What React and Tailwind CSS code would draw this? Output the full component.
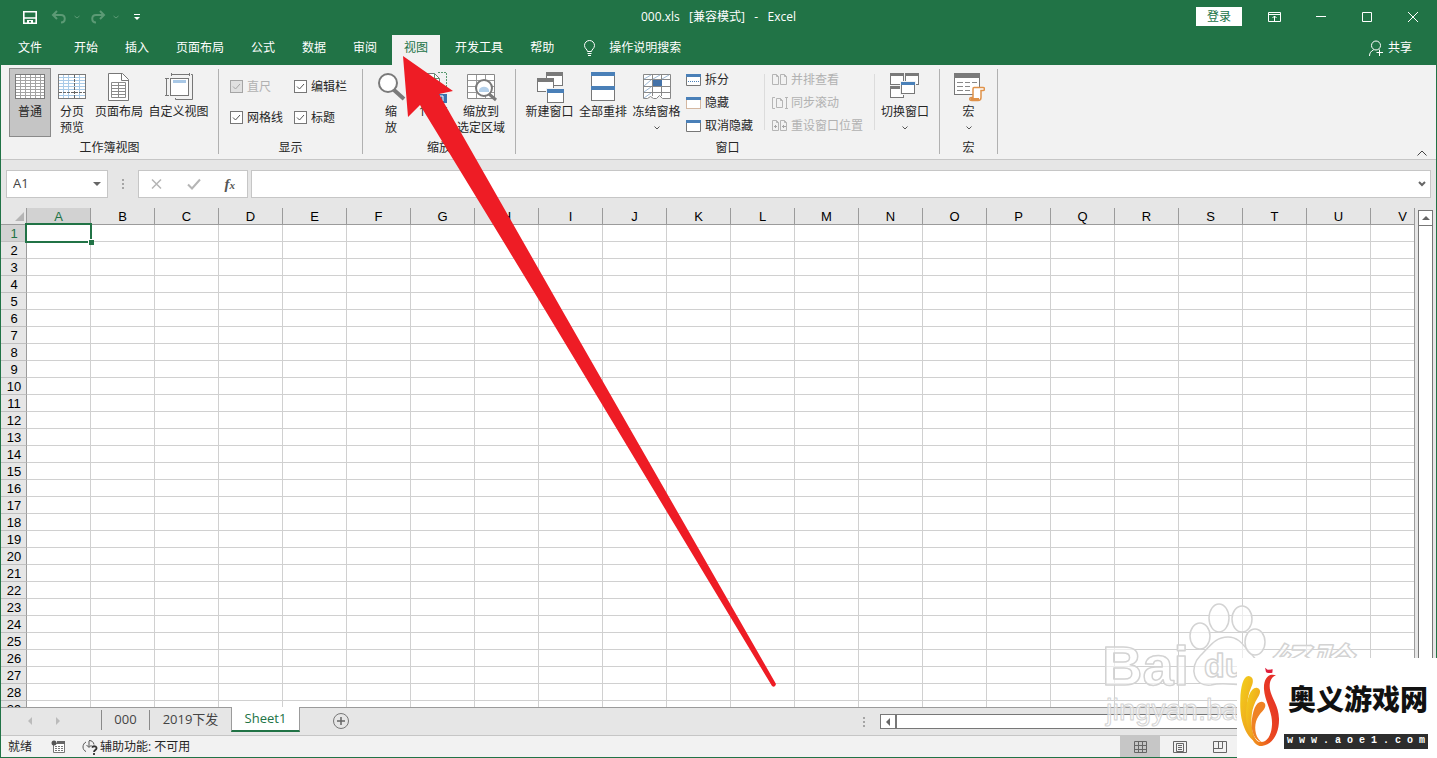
import React from 'react';

const columns = 'ABCDEFGHIJKLMNOPQRSTUV'.split('');
const rows = Array.from({ length: 29 }, (_, i) => i + 1);

/* ---------- icons ---------- */

const Icon = ({ size = 'w-8 h-8', box = '0 0 32 32', children }) => (
  <svg className={`${size} shrink-0`} viewBox={box} fill="none" aria-hidden="true">
    {children}
  </svg>
);

const Caret = () => (
  <Icon size="w-2 h-2" box="0 0 8 8">
    <path d="M1.500 2.500 4 5l2.500-2.500" stroke="#555" />
  </Icon>
);

const NormalIcon = () => (
  <Icon>
    <rect x="1.500" y="2.500" width="29" height="24" fill="#fff" stroke="#7a7a7a" />
    <path
      d="M6.500 3v23M11.500 3v23M16.500 3v23M21.500 3v23M26.500 3v23M2 5.500h28M2 8.500h28M2 11.500h28M2 14.500h28M2 17.500h28M2 20.500h28M2 23.500h28"
      stroke="#a3a3a3"
    />
  </Icon>
);

const PageBreakIcon = () => (
  <Icon>
    <rect x="2.500" y="2.500" width="27" height="24" fill="#fff" />
    <path
      d="M7.500 3v23M12.500 3v23M23.500 3v23M3 5.500h26M3 8.500h26M3 11.500h26M3 14.500h26M3 17.500h26M3 23.500h26"
      stroke="#a9cbe8"
    />
    <rect x="2.500" y="2.500" width="27" height="24" stroke="#7a7a7a" />
    <path d="M18.500 3v23M3 20.500h26" stroke="#666" strokeDasharray="3 1" />
  </Icon>
);

const PageLayoutIcon = () => (
  <Icon>
    <path d="M5.500 1.500h14l6 6v21h-20z" fill="#fff" stroke="#777" />
    <path d="M18.500 1.500v7h7" stroke="#777" />
    <path d="M8.500 10.500h14v15h-14zM8.500 13.500h14M8.500 16.500h14M8.500 19.500h14M8.500 22.500h14M15.500 10.500v15" stroke="#8a8a8a" />
  </Icon>
);

const CustomViewIcon = () => (
  <Icon>
    <path d="M8.500 1v3M26.500 1v3M8 2.500h18M2 6.500h4M2 23.500h4M3.500 6v18" stroke="#777" />
    <path d="M28 2.500h1.500v25h-17V26" stroke="#777" />
    <rect x="7.500" y="6.500" width="18" height="17" fill="#fff" stroke="#777" />
    <rect x="10" y="8" width="13" height="3" fill="#a9c8e6" />
  </Icon>
);

const ZoomIcon = () => (
  <Icon>
    <path d="m19 18 10 9" stroke="#7a7a7a" strokeWidth="4" />
    <circle cx="13" cy="11" r="9" fill="#fff" stroke="#7a7a7a" strokeWidth="2" />
  </Icon>
);

const Zoom100Icon = () => (
  <Icon>
    <path d="M4.500 1.500h12l5 5v20h-17z" fill="#fff" stroke="#777" />
    <path d="M16.500 1.500v5h5" stroke="#5c9a72" />
    <path d="M20 .5h8.500V20" stroke="#5c9a72" strokeDasharray="2 1" />
    <rect x="7" y="22" width="22" height="9" fill="#3b73af" />
    <path d="M11.500 24v5M15 24h3v5h-3zM22 24h3v5h-3z" stroke="#fff" />
  </Icon>
);

const ZoomSelectionIcon = () => (
  <Icon>
    <path d="M2.500 2.500h27v24h-27z" fill="#fff" stroke="#888" />
    <path d="M11.500 3v23M20.500 3v23M3 8.500h26M3 14.500h26M3 20.500h26" stroke="#999" />
    <path d="m24 22 7 6" stroke="#7a7a7a" strokeWidth="3" />
    <circle cx="19" cy="16" r="8" fill="#fff" stroke="#7a7a7a" strokeWidth="2" />
    <path d="M14 18a5.500 5.500 0 0 1 10 0v2H14z" fill="#b4d0ea" />
  </Icon>
);

const MiniWindow = ({ x, y, w = 16, h = 13, head = 4, bar = '#7a7a7a' }) => (
  <>
    <rect x={x + 0.5} y={y + 0.5} width={w - 1} height={h - 1} fill="#fff" stroke="#777" />
    <rect x={x} y={y} width={w} height={head} fill={bar} />
  </>
);

const NewWindowIcon = () => (
  <Icon>
    <MiniWindow x={12} y={0} w={17} h={14} />
    <MiniWindow x={3} y={6} w={17} h={14} />
    <rect x="12" y="16" width="18" height="15" fill="#f2f2f2" />
    <MiniWindow x={13} y={17} w={17} h={14} bar="#4a80b8" />
  </Icon>
);

const ArrangeIcon = () => (
  <Icon>
    <MiniWindow x={4} y={0} w={24} h={15} bar="#4a80b8" />
    <MiniWindow x={4} y={14} w={24} h={15} bar="#4a80b8" />
  </Icon>
);

const FreezeIcon = () => (
  <Icon>
    <path d="M2.500 2.500h27v24h-8l-3-3-3 3h-3l-3-2-3 2h-4z" fill="#fff" stroke="#888" />
    <path d="M11.500 3v21M20.500 3v21M3 7.500h26M3 14.500h26M3 20.500h26" stroke="#888" />
    <path d="m3 7 7-4M12 7l7-4M21 7l7-4M3 14l7-6M3 20l7-5M3 26l7-5" stroke="#9db7d3" />
    <rect x="12" y="8" width="9" height="6" fill="#4472a8" />
  </Icon>
);

const SwitchIcon = () => (
  <Icon>
    <MiniWindow x={1} y={1} w={14} h={12} head={3} />
    <MiniWindow x={16} y={1} w={14} h={12} head={3} />
    <MiniWindow x={1} y={14} w={14} h={12} head={3} />
    <rect x="11" y="9" width="16" height="14" fill="#f2f2f2" />
    <MiniWindow x={12} y={10} w={14} h={12} head={3} bar="#4a80b8" />
  </Icon>
);

const MacroIcon = () => (
  <Icon>
    <rect x="1.500" y="1.500" width="25" height="21" fill="#fff" stroke="#777" />
    <rect x="1" y="1" width="26" height="5" fill="#7a7a7a" />
    <path d="M4 10.500h6M12 10.500h5M19 10.500h5M4 14.500h6M12 14.500h5M4 18.500h6M12 18.500h5" stroke="#888" />
    <path
      d="M21 15.500h9c2 0 2 3 0 3h-2v7c0 2-1 3-3 3h-6c-3 0-3-3 0-3h1V17c0-1 0-1.500 1-1.500z"
      fill="#fff"
      stroke="#e0924a"
      strokeWidth="1.500"
    />
    <path d="M18 26h8v2h-8z" fill="#e0924a" />
  </Icon>
);

const SmallWindow = ({ variant }) => (
  <Icon size="w-4 h-4" box="0 0 16 16">
    <path
      d="M.5 2.500h14v11H.5z"
      fill="#fff"
      stroke={variant === 'hide' ? '#b0764a' : '#777'}
      strokeDasharray={variant === 'hide' ? '1 1' : undefined}
    />
    <path d="M0 2h15v3H0z" fill="#4a80b8" />
    {variant === 'split' && <path d="M2 9.500h12" stroke="#4a80b8" strokeDasharray="1 1" />}
  </Icon>
);

const SidePages = ({ variant }) => (
  <Icon size="w-4 h-4" box="0 0 16 16">
    {variant === 'sync' ? (
      <path d="M3 2.500H.5v11H3M4.500 3.500h4l2 2v7h-6zM8.500 3.500v2h2M14.500 2v12M13 2.500h3M13 13.500h3" stroke="#b5b5b5" />
    ) : (
      <path
        d="M.5 2.500h4l2 2v8h-6zM4.500 2.500v2h2M8.500 2.500h4l2 2v8h-6zM12.500 2.500v2h2"
        stroke="#b5b5b5"
      />
    )}
    {variant === 'reset' && <path d="M2 8.500h3M10 8.500h4M3.500 7v3M11.500 7v3" stroke="#a5a5a5" />}
  </Icon>
);

/* ---------- ribbon building blocks ---------- */

const Group = ({ label, className = '', children }) => (
  <section className="flex shrink-0">
    <div className="flex flex-col">
      <div className={`flex h-[72px] items-start ${className}`}>{children}</div>
      <div className="text-center leading-4">{label}</div>
    </div>
    <div className="mt-px mb-[5px] w-px bg-[#b1b1b1]" />
  </section>
);

const BigButton = ({ icon, lines, width, active, caret }) => (
  <button
    className={`flex h-[69px] shrink-0 flex-col items-center border pt-[3px] leading-4 whitespace-nowrap ${width} ${
      active ? 'border-[#8a8a8a] bg-[#c5c5c5]' : 'border-transparent'
    }`}
  >
    {icon}
    {lines.map((line) => (
      <span key={line}>{line}</span>
    ))}
    {caret && <span className="flex h-4 items-center"><Caret /></span>}
  </button>
);

const SmallButton = ({ icon, label, disabled }) => (
  <button
    disabled={disabled}
    className={`flex h-[23px] items-center gap-[3px] whitespace-nowrap ${disabled ? 'text-[#b1b1b1]' : ''}`}
  >
    {icon}
    {label}
  </button>
);

const Check = ({ label, disabled }) => (
  <label className={`flex h-[31px] items-center gap-1 whitespace-nowrap ${disabled ? 'text-[#b1b1b1]' : ''}`}>
    <span className="relative flex">
      <input
        type="checkbox"
        defaultChecked
        disabled={disabled}
        className="h-[13px] w-[13px] appearance-none border border-[#777] bg-white disabled:border-[#a5a5a5] disabled:bg-[#e0e0e0]"
      />
      <svg className="pointer-events-none absolute inset-0" viewBox="0 0 13 13" fill="none" aria-hidden="true">
        <path d="m3 6.500 2.500 2.500L10 4" stroke={disabled ? '#a5a5a5' : '#555'} />
      </svg>
    </span>
    {label}
  </label>
);

/* ---------- window sections ---------- */

const TitleBar = () => (
  <header className="grid h-[33px] grid-cols-[1fr_auto_1fr] items-center">
    <div className="flex items-center pl-[21px]">
      <button aria-label="保存">
        <Icon size="w-4 h-4" box="0 0 16 16">
          <path d="M1.800 2.800h12.400v11.400H1.800z" stroke="#fff" strokeWidth="1.600" />
          <path d="M2 8.300h12v1.500H2zM5 11h6v3H9v-2H7v2H5z" fill="#fff" />
        </Icon>
      </button>
      <button className="ml-[13px] flex items-center gap-1.5" aria-label="撤消">
        <Icon size="w-4 h-4" box="0 0 16 16">
          <path d="M6 2 2 6l4 4M2.500 6H10c5 0 5 7.500 0 7.500" stroke="#5c9a75" strokeWidth="2" />
        </Icon>
        <Icon size="w-2 h-2" box="0 0 8 8"><path d="m1.500 3 2.500 2 2.500-2" stroke="#5c9a75" /></Icon>
      </button>
      <button className="ml-[9px] flex items-center gap-1.5" aria-label="恢复">
        <Icon size="w-4 h-4" box="0 0 16 16">
          <path d="m10 2 4 4-4 4M13.500 6H6c-5 0-5 7.500 0 7.500" stroke="#5c9a75" strokeWidth="2" />
        </Icon>
        <Icon size="w-2 h-2" box="0 0 8 8"><path d="m1.500 3 2.500 2 2.500-2" stroke="#5c9a75" /></Icon>
      </button>
      <button className="ml-[13px]" aria-label="自定义快速访问工具栏">
        <Icon size="w-2 h-2" box="0 0 8 8">
          <path d="M1 1.500h6" stroke="#fff" />
          <path d="M1 4h6L4 7z" fill="#fff" />
        </Icon>
      </button>
    </div>
    <h1 className="whitespace-pre">000.xls   [兼容模式]   -   Excel</h1>
    <div className="flex items-center justify-end">
      <button className="mr-2.5 h-[19px] w-[46px] bg-white text-[#217346]">登录</button>
      <button className="flex w-[46px] justify-center" aria-label="功能区显示选项">
        <Icon size="w-4 h-4" box="0 0 16 16">
          <path d="M1.500 3.500h12v9h-12zM1.500 5.500h12M7.500 12V7M5.500 9l2-2 2 2" stroke="#fff" />
        </Icon>
      </button>
      <button className="flex w-[46px] justify-center" aria-label="最小化">
        <Icon size="w-4 h-4" box="0 0 16 16"><path d="M3 7.500h10" stroke="#fff" /></Icon>
      </button>
      <button className="flex w-[46px] justify-center" aria-label="最大化">
        <Icon size="w-4 h-4" box="0 0 16 16"><path d="M3.500 3.500h9v9h-9z" stroke="#fff" /></Icon>
      </button>
      <button className="flex w-[46px] justify-center" aria-label="关闭">
        <Icon size="w-4 h-4" box="0 0 16 16"><path d="m3 3 10 10M13 3 3 13" stroke="#fff" /></Icon>
      </button>
    </div>
  </header>
);

const TabBar = () => (
  <nav className="flex h-8 items-end gap-[3px] whitespace-nowrap">
    <button className="h-[30px] w-[58px] pb-1">文件</button>
    {['开始', '插入', '页面布局', '公式', '数据', '审阅', '视图', '开发工具', '帮助'].map((tab) => (
      <button
        key={tab}
        className={`h-[30px] px-3 pb-1 ${tab === '视图' ? 'bg-[#f2f2f2] text-[#217346]' : ''}`}
      >
        {tab}
      </button>
    ))}
    <button className="ml-3 flex h-[30px] items-center gap-3 pb-1">
      <Icon size="w-4 h-[18px]" box="0 0 16 18">
        <path d="M6.500 12.500c0-2-3-3-3-6a5 5 0 0 1 10 0c0 3-3 4-3 6zM6.500 14.500h4M7 16.500h3" stroke="#fff" />
      </Icon>
      操作说明搜索
    </button>
    <button className="mr-6 ml-auto flex h-[30px] items-center gap-1 pb-1">
      <Icon size="w-4 h-4" box="0 0 16 16">
        <circle cx="8" cy="5.500" r="4.500" stroke="#fff" />
        <path d="M1.500 16c0-3 1.500-5 4-6M8.500 12.500H15M11.500 9.500V16" stroke="#fff" />
      </Icon>
      共享
    </button>
  </nav>
);

const Ribbon = () => (
  <div className="flex h-[95px] border-b border-[#c6c6c6] bg-[#f2f2f2] pt-[3px]">
    <Group label="工作簿视图" className="pr-[6px] pl-2">
      <BigButton icon={<NormalIcon />} lines={['普通']} width="w-[42px]" active />
      <BigButton icon={<PageBreakIcon />} lines={['分页', '预览']} width="w-[42px]" />
      <BigButton icon={<PageLayoutIcon />} lines={['页面布局']} width="w-[52px]" />
      <BigButton icon={<CustomViewIcon />} lines={['自定义视图']} width="w-[67px]" />
    </Group>
    <Group label="显示">
      <div className="grid w-[143px] grid-cols-[64px_auto] pt-[3px] pl-[11px]">
        <Check label="直尺" disabled />
        <Check label="编辑栏" />
        <Check label="网格线" />
        <Check label="标题" />
      </div>
    </Group>
    <Group label="缩放" className="pr-2 pl-[6px]">
      <BigButton icon={<ZoomIcon />} lines={['缩', '放']} width="w-[44px]" />
      <BigButton icon={<Zoom100Icon />} lines={['100%']} width="w-[42px]" />
      <BigButton icon={<ZoomSelectionIcon />} lines={['缩放到', '选定区域']} width="w-[52px]" />
    </Group>
    <Group label="窗口" className="pl-[7px]">
      <BigButton icon={<NewWindowIcon />} lines={['新建窗口']} width="w-[53px]" />
      <BigButton icon={<ArrangeIcon />} lines={['全部重排']} width="w-[54px]" />
      <BigButton icon={<FreezeIcon />} lines={['冻结窗格']} width="w-[53px]" caret />
      <div className="w-[81px] pl-[3px]">
        <SmallButton icon={<SmallWindow variant="split" />} label="拆分" />
        <SmallButton icon={<SmallWindow variant="hide" />} label="隐藏" />
        <SmallButton icon={<SmallWindow />} label="取消隐藏" />
      </div>
      <div className="mt-1.5 h-14 w-px bg-[#dcdcdc]" />
      <div className="w-[109px] pl-[7px]">
        <SmallButton icon={<SidePages />} label="并排查看" disabled />
        <SmallButton icon={<SidePages variant="sync" />} label="同步滚动" disabled />
        <SmallButton icon={<SidePages variant="reset" />} label="重设窗口位置" disabled />
      </div>
      <div className="mt-1.5 mr-px h-14 w-px bg-[#dcdcdc]" />
      <BigButton icon={<SwitchIcon />} lines={['切换窗口']} width="w-[58px] mr-[5px]" caret />
    </Group>
    <Group label="宏">
      <BigButton icon={<MacroIcon />} lines={['宏']} width="w-[57px]" caret />
    </Group>
    <button className="mr-2 ml-auto self-end" aria-label="折叠功能区">
      <Icon size="w-3 h-3" box="0 0 12 12"><path d="m1.500 8.500 4.500-4.500 4.500 4.500" stroke="#444" /></Icon>
    </button>
  </div>
);

const Dots = () => (
  <Icon size="w-1 h-3" box="0 0 4 12">
    <path d="M1 1h2v2H1zM1 5h2v2H1zM1 9h2v2H1z" fill="#a5a5a5" />
  </Icon>
);

const FormulaBar = () => (
  <div className="flex h-12 items-center pr-[5px] pl-[5px]">
    <div className="flex h-7 w-[102px] items-center border border-[#c6c6c6] bg-white pr-1.5">
      <input aria-label="名称框" defaultValue="A1" className="w-full min-w-0 pl-1.5 text-[13px] text-[#444] outline-none" />
      <button aria-label="名称列表">
        <Icon size="w-2 h-2" box="0 0 8 8"><path d="M0 2h8L4 6z" fill="#666" /></Icon>
      </button>
    </div>
    <div className="flex w-[30px] justify-center"><Dots /></div>
    <div className="flex h-7 w-[110px] items-center justify-between border border-[#c6c6c6] bg-white pr-3 pl-[9px]">
      <button aria-label="取消">
        <Icon size="w-4 h-4" box="0 0 16 16"><path d="m4 3.500 9 9M13 3.500l-9 9" stroke="#b5b5b5" strokeWidth="1.500" /></Icon>
      </button>
      <button aria-label="输入">
        <Icon size="w-4 h-4" box="0 0 16 16"><path d="m2 8.500 4 4 8-9" stroke="#b5b5b5" strokeWidth="2" /></Icon>
      </button>
      <button aria-label="插入函数" className="font-['Liberation_Serif',serif] text-[15px] leading-4 font-bold text-[#555] italic">
        f<span className="text-[11px]">x</span>
      </button>
    </div>
    <div className="ml-[3px] flex h-7 flex-1 items-center border border-[#c6c6c6] bg-white pr-1">
      <input aria-label="编辑栏" className="min-w-0 flex-1 px-2 text-[13px] outline-none" />
      <button aria-label="展开编辑栏">
        <Icon size="w-2 h-2" box="0 0 8 8"><path d="m1 2 3 3 3-3" stroke="#666" strokeWidth="2" /></Icon>
      </button>
    </div>
  </div>
);

const Sheet = () => (
  <div className="flex min-h-0 flex-1">
    <div className="min-w-0 flex-1 overflow-hidden border-r border-[#9b9b9b] bg-white">
      <table className="w-[1434px] table-fixed border-separate border-spacing-0 font-['Liberation_Sans',sans-serif] text-[13px] leading-[15px] text-black">
        <thead>
          <tr className="h-[17px]">
            <th className="w-[26px] border-r border-b border-[#9b9b9b] bg-[#e6e6e6] p-0">
              <svg className="ml-3 h-3 w-3" viewBox="0 0 12 12" aria-hidden="true">
                <path d="M11 2v9H2z" fill="#b5b5b5" />
              </svg>
            </th>
            {columns.map((col) => (
              <th
                key={col}
                className={`w-16 border-r border-b border-[#9b9b9b] px-0 pt-px pb-0 font-normal ${
                  col === 'A' ? 'bg-[#d2d2d2] text-[#217346]' : 'bg-[#e6e6e6]'
                }`}
              >
                {col}
              </th>
            ))}
          </tr>
        </thead>
        <tbody>
          {rows.map((row) => (
            <tr key={row} className="h-[17px]">
              <th
                className={`border-r border-b border-r-[#9b9b9b] border-b-[#c0c0c0] pt-px pr-0 pb-0 pl-px font-normal ${
                  row === 1 ? 'bg-[#d2d2d2] text-[#217346]' : 'bg-[#e6e6e6]'
                }`}
              >
                {row}
              </th>
              {columns.map((col) => (
                <td key={col} className="relative border-r border-b border-[#d0d0d0] p-0">
                  {row === 1 && col === 'A' && (
                    <div className="absolute -inset-x-0.5 -top-0.5 -bottom-0.5 z-10 border-2 border-[#217346]">
                      <span className="absolute -right-1 -bottom-1 h-1.5 w-1.5 border-t border-l border-white bg-[#217346]" />
                    </div>
                  )}
                </td>
              ))}
            </tr>
          ))}
        </tbody>
      </table>
    </div>
    <div className="mx-[3px] mt-0.5 flex w-[15px] flex-col">
      <button className="flex h-4 items-center justify-center border border-[#777] bg-white" aria-label="向上滚动">
        <Icon size="w-2 h-2" box="0 0 8 8"><path d="M0 6h8L4 2z" fill="#666" /></Icon>
      </button>
      <div className="-mt-px flex-1 border border-[#777] bg-white" />
    </div>
  </div>
);

const SheetTabs = () => (
  <div className="flex h-[29px] border-t border-b border-t-[#9b9b9b] border-b-[#c6c6c6] text-[13px] whitespace-nowrap text-[#444]">
    <div className="flex h-[25px] w-[100px] items-center gap-5 pl-[25px]">
      <button aria-label="上一个工作表">
        <Icon size="w-2 h-2" box="0 0 8 8"><path d="M6 0v8L2 4z" fill="#bbb" /></Icon>
      </button>
      <button aria-label="下一个工作表">
        <Icon size="w-2 h-2" box="0 0 8 8"><path d="M2 0v8l4-4z" fill="#bbb" /></Icon>
      </button>
    </div>
    <button className="mt-0.5 h-5 w-12 border-l border-[#8a8a8a]">000</button>
    <button className="mt-0.5 h-5 w-[82px] border-l border-[#8a8a8a]">2019下发</button>
    <button className="-mt-px h-[25px] w-[69px] border-x border-b-2 border-x-[#9b9b9b] border-b-[#217346] bg-white text-[#217346]">
      Sheet1
    </button>
    <button className="mt-1 ml-8 self-start" aria-label="新工作表">
      <Icon size="w-[18px] h-[18px]" box="0 0 18 18">
        <circle cx="9" cy="9" r="7.500" stroke="#777" />
        <path d="M5 9h8M9 5v8" stroke="#666" strokeWidth="1.500" />
      </Icon>
    </button>
    <div className="ml-auto flex w-2/5 items-center">
      <Dots />
      <button className="ml-[14px] flex h-[15px] w-4 items-center justify-center border border-[#777] bg-white" aria-label="向左滚动">
        <Icon size="w-2 h-2" box="0 0 8 8"><path d="M6 0v8L2 4z" fill="#666" /></Icon>
      </button>
      <div className="-ml-px h-[15px] flex-1 border border-l-2 border-[#777] bg-white" />
    </div>
  </div>
);

const StatusBar = () => (
  <footer className="flex h-[21px] items-center bg-[#f2f2f2] pl-[7px] whitespace-nowrap">
    <span>就绪</span>
    <Icon size="w-4 h-4 ml-[18px]" box="0 0 16 16">
      <path d="M3.500 4.500v9h11v-9z" fill="#fff" stroke="#777" />
      <path d="M7 2h8v3H7z" fill="#666" />
      <circle cx="4" cy="4" r="2.500" fill="#555" />
      <path d="M5 7.500h2M8 7.500h2M11 7.500h2M5 9.500h2M8 9.500h2M11 9.500h2M5 11.500h2M8 11.500h2M11 11.500h2" stroke="#777" />
    </Icon>
    <button className="ml-4 flex items-center gap-0.5">
      <Icon size="w-4 h-4" box="0 0 16 16">
        <path d="M4 3C0 5 0 11 4 12.500M7 1.500c3 0 4.500 1.500 5 4M7 2v6M4.500 6 7 8.500 9.500 6" stroke="#555" />
        <path d="M10 8.500c1-2 5-1.500 4.500 1-.3 1.500-2.500 1.500-2.500 3.500M12 14v2" stroke="#333" strokeWidth="1.800" />
      </Icon>
      辅助功能: 不可用
    </button>
    <div className="mr-[196px] ml-auto flex h-full">
      <button className="flex w-10 items-center justify-center bg-[#c6c6c6]" aria-label="普通">
        <Icon size="w-4 h-4" box="0 0 16 16">
          <path d="M2.500 2.500h12v11h-12zM6.500 3v11M10.500 3v11M3 6.500h12M3 10.500h12" stroke="#666" />
        </Icon>
      </button>
      <button className="flex w-10 items-center justify-center" aria-label="页面布局">
        <Icon size="w-4 h-4" box="0 0 16 16">
          <path d="M1.500 2.500h13v11h-13zM4.500 4.500h7v8h-7zM6 6.500h4M6 8.500h4M6 10.500h4" stroke="#666" />
        </Icon>
      </button>
      <button className="flex w-10 items-center justify-center" aria-label="分页预览">
        <Icon size="w-4 h-4" box="0 0 16 16">
          <path d="M1.500 2.500h13v11h-13zM2 9.500h8.500V3M6.500 3v6" stroke="#666" />
        </Icon>
      </button>
    </div>
  </footer>
);

/* ---------- overlays ---------- */

const Arrow = () => (
  <svg className="pointer-events-none absolute top-0 left-0" width="800" height="700" viewBox="0 0 800 700" aria-hidden="true">
    <path d="M403 56 453 91 439 94 562 310 776 684Q775 688 772 686L545 310 420 105 408 117Z" fill="#ee1c25" />
  </svg>
);

const Watermark = () => (
  <svg
    className="pointer-events-none absolute right-0 bottom-0 font-['Liberation_Sans','Noto_Sans_CJK_SC',sans-serif] font-bold"
    width="357"
    height="168"
    viewBox="0 0 357 168"
    fill="#fff"
    fillOpacity="0.6"
    stroke="#d3d3d3"
    strokeWidth="1.500"
    strokeLinejoin="round"
  >
    <text x="22" y="95" fontSize="56">Bai</text>
    <path d="M148 47c12 0 16 10 25 19 10 10 10 29-8 29-12 0-22-3-34 0-18 2-22-18-11-29 9-8 14-19 28-19z" />
    <text x="124" y="87" fontSize="34">du</text>
    <ellipse cx="139" cy="28" rx="10" ry="14" />
    <ellipse cx="162" cy="29" rx="10" ry="13" />
    <ellipse cx="120" cy="46" rx="10" ry="13" />
    <ellipse cx="175" cy="52" rx="10" ry="13" />
    <text x="187" y="89" fontSize="42" fontStyle="italic">经验</text>
    <text x="26" y="130" fontSize="29" fontWeight="400" strokeWidth="1">jingyan.ba</text>
  </svg>
);

const SiteLogo = () => (
  <div className="absolute right-0 bottom-0 flex h-[100px] w-[200px] bg-white font-['Noto_Sans_CJK_SC',sans-serif]">
    <svg className="h-[100px] w-[47px] shrink-0" viewBox="471 204 141 300" aria-hidden="true">
      <defs>
        <linearGradient id="gold" x1="0" y1="0" x2="1" y2="1">
          <stop offset="0" stopColor="#f2d21c" />
          <stop offset="1" stopColor="#ee8a1e" />
        </linearGradient>
        <linearGradient id="flame" x1="1" y1="0" x2="0" y2="1">
          <stop offset="0" stopColor="#e4262a" />
          <stop offset="0.6" stopColor="#ea4a20" />
          <stop offset="1" stopColor="#f2a01c" />
        </linearGradient>
      </defs>
      <path d="M506 258c14 2 16 16 8 33-18 40-16 90 2 134 6 18 14 28 24 38-44-16-62-74-59-134 1-38 8-70 25-71z" fill="url(#gold)" />
      <path d="M530 293c13 3 13 15 3 30-20 32-22 66-14 106 4 16 10 24 18 32-28-14-42-58-39-96 2-40 14-74 32-72z" fill="url(#gold)" />
      <path d="M546 335c13 3 13 16 2 28-20 20-26 42-20 68 3 12 10 20 18 26-22-4-32-30-31-58 2-38 14-66 31-64z" fill="#ef8224" />
      <path d="M588 256c-22-8-38 10-36 42 2 36 26 66 24 106-2 34-16 52-32 52-14 0-22-10-28-22 0 22 14 35 30 34 32-4 52-38 51-82-1-44-28-66-28-98 0-18 8-28 19-32z" fill="url(#flame)" />
      <path d="m555 233 8 6 15-1-1 10c-8 2-16 2-19-2z" fill="#e01f3c" />
    </svg>
    <div className="flex w-36 flex-col">
      <span className="mt-5 pl-1 text-[28px] leading-10 font-black whitespace-nowrap text-[#111]">奥义游戏网</span>
      <span className="mt-4 h-[15px] bg-[#2d2d2d] text-center font-['Liberation_Mono',monospace] text-[10px] leading-[14px] font-bold whitespace-nowrap text-white">
        w w w . a o e 1 . c o m
      </span>
    </div>
  </div>
);

const App = () => (
  <div className="relative h-screen overflow-hidden font-['Open_Sans','Noto_Sans_CJK_SC',sans-serif] text-[12px] text-[#262626]">
    <main className="flex h-full flex-col border-x border-b border-[#217346] bg-[#e6e6e6]">
      <div className="bg-[#217346] text-white">
        <TitleBar />
        <TabBar />
      </div>
      <Ribbon />
      <FormulaBar />
      <Sheet />
      <SheetTabs />
      <StatusBar />
    </main>
    <Watermark />
    <SiteLogo />
    <Arrow />
  </div>
);

export default App;
